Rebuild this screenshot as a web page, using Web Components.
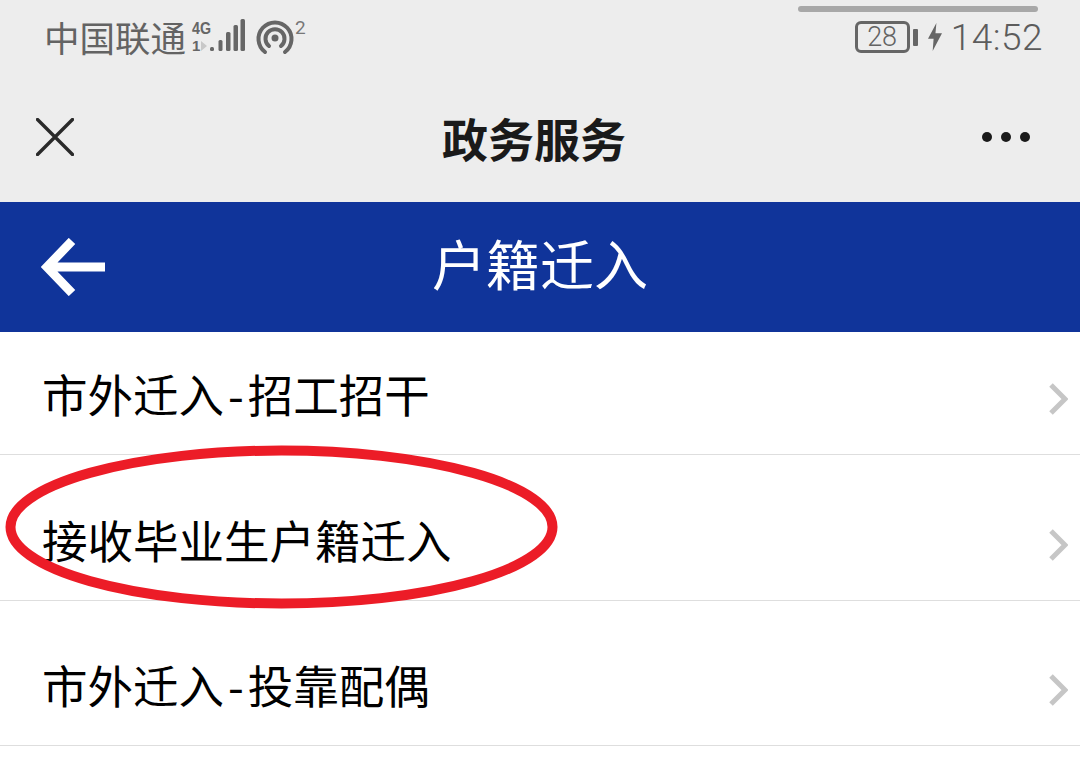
<!DOCTYPE html>
<html lang="zh">
<head>
<meta charset="utf-8">
<title>户籍迁入</title>
<style>
  html, body { margin: 0; height: 100%; background: #fff; overflow: hidden; }
  body { font-family: "Noto Sans CJK SC", "Liberation Sans", sans-serif; }
</style>
</head>
<body>
<status-bar></status-bar>
<title-bar>政务服务</title-bar>
<page-header>户籍迁入</page-header>
<row-list>
  <list-row>市外迁入<span style="margin:0 4px">-</span>招工招干</list-row>
  <list-row low>接收毕业生户籍迁入</list-row>
  <list-row low>市外迁入<span style="margin:0 4px">-</span>投靠配偶</list-row>
</row-list>

<script>
  // Top phone status bar: carrier + signal on the left, battery + clock on the right.
  class StatusBar extends HTMLElement {
    connectedCallback() {
      this.attachShadow({ mode: 'open' }).innerHTML = `
        <style>
          :host{ display:flex; align-items:center; justify-content:space-between; position:relative;
                 height:82px; box-sizing:border-box; padding:0 37px 8px 44px; background:#ededed; color:#636363; }
          .left,.right{ display:flex; align-items:center; }
          .carrier{ font-size:35.500px; line-height:40px; }
          .net{ display:block; margin-left:2px; }
          .pill{ position:absolute; left:798px; top:6px; width:240px; height:6px; border-radius:3px; background:#a8a8a8; }
          .time{ font:37px/42px "Roboto","Liberation Sans",sans-serif; letter-spacing:.5px; margin:2px 0 0 9px; font-weight:300; color:#5c5c5c; }
          .batt{ display:flex; align-items:center; justify-content:center; box-sizing:border-box; width:55px; height:32px;
                 border:3px solid #666; border-radius:6px; font:27px/26px "Roboto","Liberation Sans",sans-serif; font-weight:300; }
          .nub{ width:5px; height:17px; margin-left:3px; background:#666; border-radius:1px; }
          .bolt{ margin-left:10px; }
        </style>
        <div class="pill"></div>
        <div class="left">
          <span class="carrier">中国联通</span>
          <svg class="net" width="124" height="46" viewBox="188 14 124 46">
            <text x="192" y="34" font-family="Liberation Sans" font-weight="700" font-size="17" textLength="19" lengthAdjust="spacingAndGlyphs" fill="#666">4G</text>
            <text x="192" y="51" font-family="Liberation Sans" font-weight="700" font-size="15" fill="#666">1</text>
            <path d="M201 41l6 5-6 5z" fill="#c8c8c8"/>
            <g fill="#666">
              <rect x="210" y="47" width="4" height="4" rx="1.500"/>
              <rect x="218.500" y="40" width="4" height="11" rx="1.500"/>
              <rect x="226" y="32" width="4.500" height="19" rx="1.500"/>
              <rect x="233.500" y="25" width="4.500" height="26" rx="1.500"/>
              <rect x="240.500" y="19" width="4.500" height="32" rx="1.500"/>
            </g>
            <g fill="none" stroke="#666" stroke-width="4" stroke-linecap="round">
              <path d="M265 52a16.500 16.500 0 1 1 20 0"/>
              <path d="M269 46a9.500 9.500 0 1 1 12 0"/>
            </g>
            <circle cx="275" cy="38" r="3.500" fill="#666"/>
            <text x="295" y="34" font-family="Roboto" font-size="19" fill="#777">2</text>
          </svg>
        </div>
        <div class="right">
          <span class="batt">28</span><span class="nub"></span>
          <svg class="bolt" width="14" height="30" viewBox="0 0 15 30"><path d="M9 0L0 17h6l-1 13 10-19H8z" fill="#666"/></svg>
          <span class="time">14:52</span>
        </div>`;
    }
  }

  // Mini-program host bar with close and more buttons.
  class TitleBar extends HTMLElement {
    connectedCallback() {
      this.attachShadow({ mode: 'open' }).innerHTML = `
        <style>
          :host{ display:flex; align-items:center; justify-content:space-between; height:120px; box-sizing:border-box;
                 padding:0 50px 10px 36px; background:#ededed; color:#1a1a1a; }
          .t{ font-size:46px; font-weight:700; line-height:60px; margin-left:12px; }
          svg{ display:block; }
        </style>
        <svg width="38" height="38" viewBox="0 0 38 38"><path d="M1.500 1.500l35 35M36.500 1.500l-35 35" stroke="#2a2a2a" stroke-width="3.400" stroke-linecap="round"/></svg>
        <span class="t"><slot></slot></span>
        <svg width="48" height="10" viewBox="0 0 48 10" fill="#1a1a1a"><circle cx="5" cy="5" r="5"/><circle cx="24" cy="5" r="5"/><circle cx="43" cy="5" r="5"/></svg>`;
    }
  }

  class PageHeader extends HTMLElement {
    connectedCallback() {
      this.attachShadow({ mode: 'open' }).innerHTML = `
        <style>
          :host{ display:flex; align-items:center; justify-content:space-between; height:130px; box-sizing:border-box;
                 padding:0 41px; background:#10349a; color:#fff; }
          .t{ font-size:54px; line-height:70px; font-weight:400; margin-bottom:8px; }
          .side{ width:64px; flex:none; }
          svg{ display:block; }
        </style>
        <svg class="side" width="64" height="58" viewBox="0 0 64 58"><path d="M64 29H8M31 3L6 29l25 26" fill="none" stroke="#fff" stroke-width="9"/></svg>
        <span class="t"><slot></slot></span>
        <span class="side"></span>`;
    }
  }

  // List wrapper; the red hand-drawn ring sits over the second row.
  class RowList extends HTMLElement {
    connectedCallback() {
      this.attachShadow({ mode: 'open' }).innerHTML = `
        <style>
          :host{ display:block; position:relative; background:#fff; }
          svg{ position:absolute; left:0; top:107px; pointer-events:none; }
        </style>
        <slot></slot>
        <svg width="570" height="176" viewBox="0 0 570 176">
          <ellipse cx="281.500" cy="88" rx="271" ry="76.500" fill="none" stroke="#ec1c27" stroke-width="10"/>
        </svg>`;
    }
  }

  class ListRow extends HTMLElement {
    connectedCallback() {
      this.attachShadow({ mode: 'open' }).innerHTML = `
        <style>
          :host{ display:flex; align-items:center; justify-content:space-between; height:123px; box-sizing:border-box;
                 padding:0 12px 0 42px; border-bottom:1px solid #dedede; color:#000; font-size:45.500px; line-height:60px; }
          :host([low]){ height:146px; padding-top:22px; }
          :host(:last-child){ height:145px; }
          svg{ display:block; flex:none; margin-top:12px; }
        </style>
        <span><slot></slot></span>
        <svg width="20" height="32" viewBox="0 0 20 32"><path d="M3 2l14 14L3 30" fill="none" stroke="#c6c6c6" stroke-width="5"/></svg>`;
    }
  }

  customElements.define('status-bar', StatusBar);
  customElements.define('title-bar', TitleBar);
  customElements.define('page-header', PageHeader);
  customElements.define('row-list', RowList);
  customElements.define('list-row', ListRow);
</script>
</body>
</html>
